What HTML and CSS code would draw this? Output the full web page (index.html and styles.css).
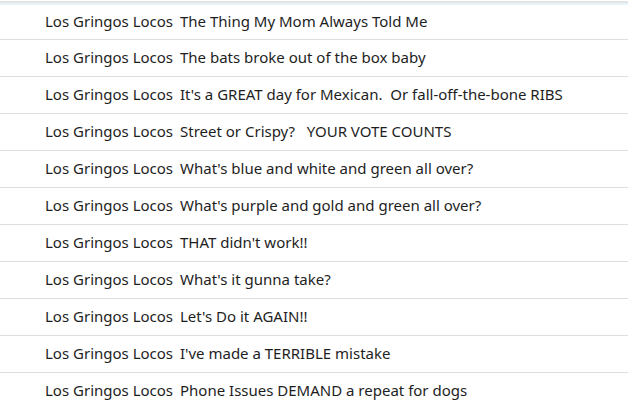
FILE: index.html
```html
<!DOCTYPE html>
<html>
<head>
<meta charset="utf-8">
<link rel="stylesheet" href="styles.css">
</head>
<body>
<div class="list">
  <div class="row first"><span class="from">Los Gringos Locos</span><span class="subj">The Thing My Mom Always Told Me</span></div>
  <div class="row"><span class="from">Los Gringos Locos</span><span class="subj">The bats broke out of the box baby</span></div>
  <div class="row"><span class="from">Los Gringos Locos</span><span class="subj">It's a GREAT day for Mexican.&nbsp; Or fall-off-the-bone RIBS</span></div>
  <div class="row"><span class="from">Los Gringos Locos</span><span class="subj">Street or Crispy?&nbsp;&nbsp; YOUR VOTE COUNTS</span></div>
  <div class="row"><span class="from">Los Gringos Locos</span><span class="subj">What's blue and white and green all over?</span></div>
  <div class="row"><span class="from">Los Gringos Locos</span><span class="subj">What's purple and gold and green all over?</span></div>
  <div class="row"><span class="from">Los Gringos Locos</span><span class="subj">THAT didn't work!!</span></div>
  <div class="row"><span class="from">Los Gringos Locos</span><span class="subj">What's it gunna take?</span></div>
  <div class="row"><span class="from">Los Gringos Locos</span><span class="subj">Let's Do it AGAIN!!</span></div>
  <div class="row"><span class="from">Los Gringos Locos</span><span class="subj">I've made a TERRIBLE mistake</span></div>
  <div class="row"><span class="from">Los Gringos Locos</span><span class="subj">Phone Issues DEMAND a repeat for dogs</span></div>
</div>
</body>
</html>
```
FILE: styles.css
```css
html, body {
  margin: 0;
  padding: 0;
  background: #ffffff;
}
body {
  font-family: "Noto Sans", "Open Sans", sans-serif;
  font-size: 15px;
  color: #1e1e1e;
}
.list {
  margin-top: 1px;
  border-top: 2px solid #e4e4e4;
}
.row {
  display: flex;
  align-items: center;
  height: 36px;
  border-bottom: 1px solid #dedede;
  white-space: nowrap;
  line-height: 20px;
}
.row.first {
  height: 34px;
  border-top: 2px solid #e9f3fa;
}
.from {
  box-sizing: border-box;
  width: 180px;
  padding-left: 45px;
  padding-bottom: 3px;
}
.subj {
  flex: 1;
  padding-bottom: 3px;
}
```
